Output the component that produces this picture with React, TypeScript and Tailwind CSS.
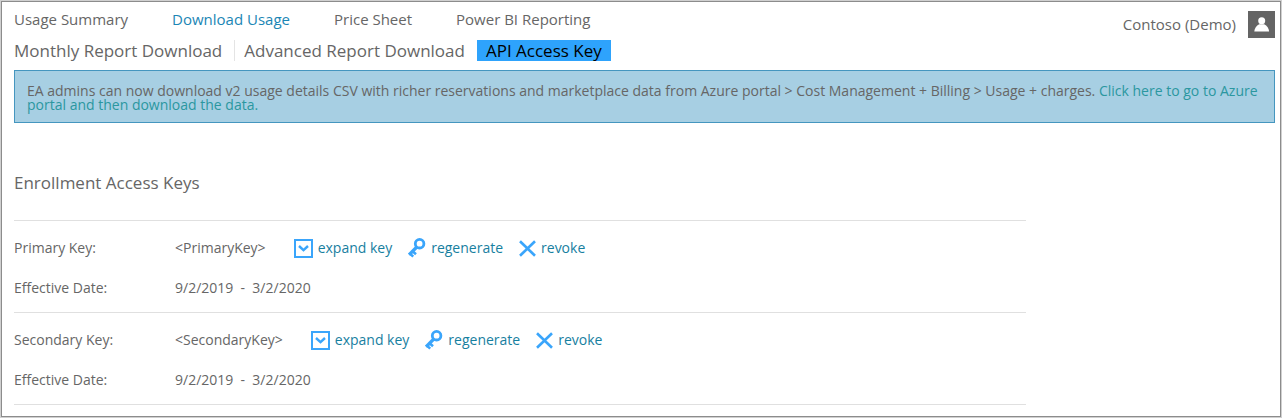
import { useState } from "react";

const sections = ["Usage Summary", "Download Usage", "Price Sheet", "Power BI Reporting"];
const reports = ["Monthly Report Download", "Advanced Report Download", "API Access Key"];

const keys = [
  { label: "Primary Key:", value: "<PrimaryKey>", from: "9/2/2019", to: "3/2/2020" },
  { label: "Secondary Key:", value: "<SecondaryKey>", from: "9/2/2019", to: "3/2/2020" },
];

function ExpandIcon() {
  return (
    <svg width="19" height="19" viewBox="0 0 19 19" fill="none" stroke="#3aa5fb" aria-hidden="true">
      <rect x="1" y="1" width="17" height="17" strokeWidth="2" />
      <path d="M5 7 9.500 11.200 14 7" strokeWidth="2.4" />
    </svg>
  );
}

function KeyIcon() {
  return (
    <svg width="18" height="20" viewBox="0 0 18 20" fill="none" stroke="#3aa5fb" aria-hidden="true">
      <circle cx="11.6" cy="5.700" r="4.300" strokeWidth="2.8" />
      <path d="M8.800 9 1 16.800" strokeWidth="3.2" />
      <path d="m4.600 13.200 3.400 3M2 15.600l3.200 3" strokeWidth="2.6" />
    </svg>
  );
}

function RevokeIcon() {
  return (
    <svg width="17" height="17" viewBox="0 0 17 17" fill="none" stroke="#3aa5fb" strokeWidth="2.6" aria-hidden="true">
      <path d="M1 1.2 16 15.8M16 1.2 1 15.8" />
    </svg>
  );
}

function UserIcon() {
  return (
    <svg width="27" height="27" viewBox="0 0 27 27" fill="#fff" aria-hidden="true">
      <circle cx="13.7" cy="9.8" r="3.500" />
      <path d="M6.300 20.500c.2-3.600 2-5.600 4.900-7.300h5c2.900 1.700 4.700 3.700 4.900 7.300z" />
    </svg>
  );
}

export default function App() {
  const [section, setSection] = useState("Download Usage");
  const [report, setReport] = useState("API Access Key");

  return (
    <div className="min-h-screen bg-[#d0d0d0] p-px font-['Open_Sans',sans-serif] text-sm text-[#666]">
      <div className="min-h-[calc(100vh-2px)] border border-[#8c8c8c] bg-white pr-[5px] pl-3">
        <header className="flex items-start justify-between">
          <nav className="flex gap-11 pt-1 text-[15px] leading-[26px]">
            {sections.map((s) => (
              <button
                key={s}
                type="button"
                onClick={() => setSection(s)}
                className={s === section ? "text-[#1b86b5]" : "text-[#666]"}
              >
                {s}
              </button>
            ))}
          </nav>
          <div className="flex items-center gap-3 pt-[9px] text-[15px]">
            <span>Contoso (Demo)</span>
            <button type="button" aria-label="Account" className="bg-[#646464]">
              <UserIcon />
            </button>
          </div>
        </header>

        <nav className="mt-0.5 flex text-[17px] leading-[21px]">
          {reports.map((r, i) => (
            <button
              key={r}
              type="button"
              onClick={() => setReport(r)}
              className={
                r === report
                  ? "bg-[#2ea3fc] px-[9px] text-black"
                  : i === 0
                    ? "mr-[9px] border-r border-[#e4e4e4] pr-3"
                    : "mr-3"
              }
            >
              {r}
            </button>
          ))}
        </nav>

        <p className="mt-[9px] border border-[#4596bf] bg-[#a7cfe3] px-3 pt-[13px] pb-[10px] leading-[14px]">
          EA admins can now download v2 usage details CSV with richer reservations and marketplace data from
          Azure portal &gt; Cost Management + Billing &gt; Usage + charges.{" "}
          <a href="#azure-portal" className="text-[#2b97a0]">
            Click here to go to Azure portal and then download the data.
          </a>
        </p>

        <main className="max-w-[1012px]">
          <h1 className="pt-12 pb-[25px] text-[17px] leading-6">Enrollment Access Keys</h1>
          <table className="w-full border-collapse text-left leading-5">
            {keys.map((k) => (
              <tbody key={k.label} className="border-y border-[#e0e0e0]">
                <tr>
                  <th scope="row" className="w-[161px] pt-[17px] font-normal">{k.label}</th>
                  <td className="pt-[17px]">
                    <div className="flex items-center gap-4 text-[#17809f]">
                      <span className="mr-3 text-[#666]">{k.value}</span>
                      <button type="button" className="flex items-center gap-[5px]"><ExpandIcon />expand key</button>
                      <button type="button" className="flex items-center gap-[5px]"><KeyIcon />regenerate</button>
                      <button type="button" className="flex items-center gap-[5px]"><RevokeIcon />revoke</button>
                    </div>
                  </td>
                </tr>
                <tr>
                  <th scope="row" className="pt-5 pb-[14px] font-normal">Effective Date:</th>
                  <td className="pt-5 pb-[14px]">{k.from} &nbsp;-&nbsp; {k.to}</td>
                </tr>
              </tbody>
            ))}
          </table>
        </main>
      </div>
    </div>
  );
}
